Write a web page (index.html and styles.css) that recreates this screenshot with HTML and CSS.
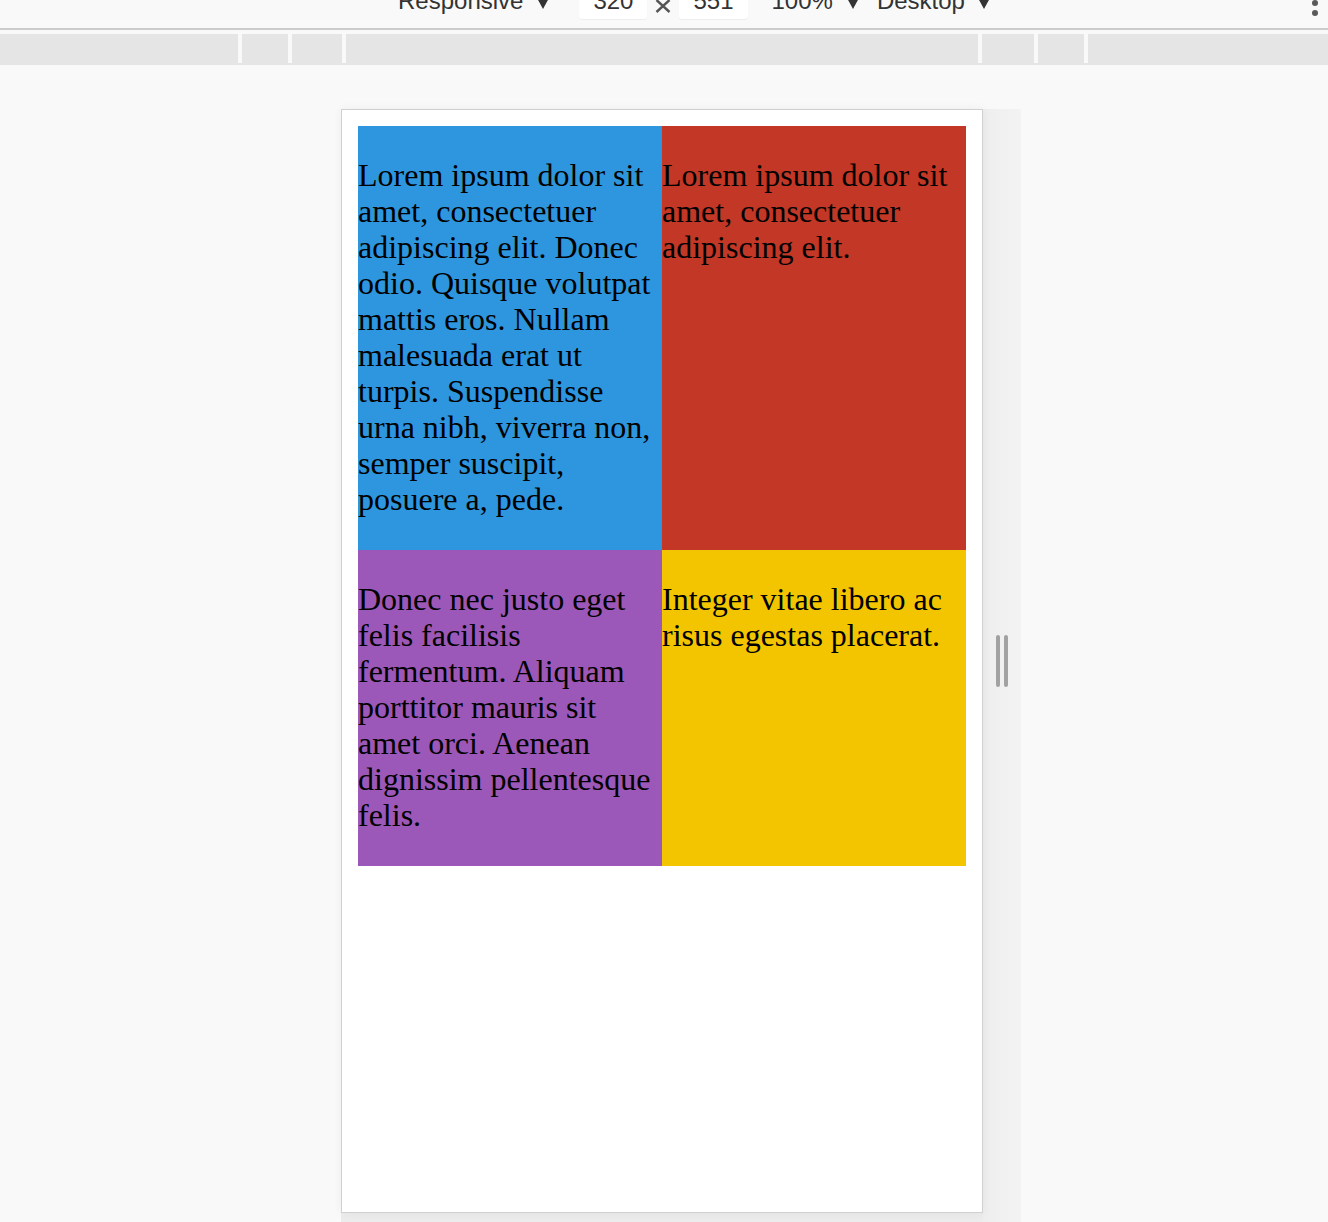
FILE: index.html
```html
<!DOCTYPE html>
<html lang="en">
<head>
<meta charset="utf-8">
<title>Responsive grid</title>
<link rel="stylesheet" href="styles.css">
</head>
<body>
<header class="toolbar">
  <span class="tb-text tb-responsive">Responsive</span>
  <svg class="caret caret-1" width="12" height="11" viewBox="0 0 12 11"><polygon points="0,0 12,0 6,11"/></svg>
  <span class="tb-box tb-box-1">320</span>
  <svg class="times" width="16" height="14" viewBox="0 0 16 14"><path d="M1.5 1 L14.5 13 M14.5 1 L1.5 13"/></svg>
  <span class="tb-box tb-box-2">551</span>
  <span class="tb-text tb-zoom">100%</span>
  <svg class="caret caret-2" width="12" height="11" viewBox="0 0 12 11"><polygon points="0,0 12,0 6,11"/></svg>
  <span class="tb-text tb-desktop">Desktop</span>
  <svg class="caret caret-3" width="12" height="11" viewBox="0 0 12 11"><polygon points="0,0 12,0 6,11"/></svg>
  <svg class="kebab" width="6" height="16" viewBox="0 0 6 16"><circle cx="3" cy="3" r="3"/><circle cx="3" cy="13" r="3"/></svg>
</header>
<div class="ruler">
  <div class="seg seg-a"></div>
  <div class="seg seg-b"></div>
  <div class="seg seg-c"></div>
  <div class="seg seg-d"></div>
  <div class="seg seg-e"></div>
  <div class="seg seg-f"></div>
  <div class="seg seg-g"></div>
</div>
<main class="stage">
  <div class="device">
    <div class="frame">
      <div class="grid">
        <div class="cell blue"><p>Lorem ipsum dolor sit amet, consectetuer adipiscing elit. Donec odio. Quisque volutpat mattis eros. Nullam malesuada erat ut turpis. Suspendisse urna nibh, viverra non, semper suscipit, posuere a, pede.</p></div>
        <div class="cell red"><p>Lorem ipsum dolor sit amet, consectetuer adipiscing elit.</p></div>
        <div class="cell purple"><p>Donec nec justo eget felis facilisis fermentum. Aliquam porttitor mauris sit amet orci. Aenean dignissim pellentesque felis.</p></div>
        <div class="cell yellow"><p>Integer vitae libero ac risus egestas placerat.</p></div>
      </div>
    </div>
    <div class="side">
      <div class="handle"></div>
      <div class="handle"></div>
    </div>
    <div class="bottom"></div>
  </div>
</main>
</body>
</html>
```
FILE: styles.css
```css
html, body {
  margin: 0;
  height: 100%;
  overflow: hidden;
  background: #f9f9f9;
}

.toolbar {
  height: 28px;
  border-bottom: 2px solid #cbcbcb;
  display: flex;
  align-items: flex-start;
  padding-left: 398px;
  overflow: hidden;
  font-family: "Liberation Sans", Arial, sans-serif;
  font-size: 24px;
  line-height: 24px;
  color: #333;
}

.tb-text {
  margin-top: -11px;
  white-space: nowrap;
}

.tb-box {
  margin-top: -11px;
  height: 30px;
  padding: 0 14px;
  background: #fff;
  border-radius: 3px;
  box-shadow: 0 1px 1px rgba(0, 0, 0, 0.05);
  white-space: nowrap;
  box-sizing: border-box;
}

.caret {
  margin-top: -2px;
  fill: #333;
  flex: none;
}

.caret-1 { margin-left: 14px; }
.tb-box-1 { margin-left: 30px; }
.times {
  margin-left: 8px;
  margin-top: -1px;
  flex: none;
}
.times path {
  stroke: #555;
  stroke-width: 2.4;
  fill: none;
}
.tb-box-2 { margin-left: 8px; }
.tb-zoom { margin-left: 24px; }
.caret-2 { margin-left: 14px; }
.tb-desktop { margin-left: 18px; }
.caret-3 { margin-left: 13px; }

.kebab {
  margin-left: auto;
  margin-right: 10px;
  fill: #5a5a5a;
  flex: none;
}

.ruler {
  margin-top: 4px;
  display: flex;
  gap: 4px;
  border-bottom: 2px solid #e5e5e5;
}

.seg {
  height: 29px;
  background: #e5e5e5;
  flex: none;
}
.seg-a { width: 238px; }
.seg-b { width: 46px; }
.seg-c { width: 50px; }
.seg-d { width: 632px; }
.seg-e { width: 52px; }
.seg-f { width: 46px; }
.seg-g { flex: 1; }

.stage {
  padding: 44px 0 0 341px;
}

.device {
  display: grid;
  grid-template-columns: 642px 38px;
  grid-template-rows: 1104px 20px;
}

.frame {
  grid-column: 1;
  grid-row: 1;
  box-sizing: border-box;
  background: #fff;
  border: 1px solid #d0d0d0;
  padding: 16px;
  box-shadow: 0 0 10px rgba(0, 0, 0, 0.05);
  position: relative;
  z-index: 1;
}

.side {
  grid-column: 2;
  grid-row: 1 / 3;
  background: linear-gradient(to right, #eeeeee, #f3f3f3);
  display: flex;
  align-items: center;
  justify-content: center;
  gap: 4px;
  padding-bottom: 20px;
}

.handle {
  width: 4px;
  height: 52px;
  background: #a2a2a2;
  border-radius: 2px;
}

.bottom {
  grid-column: 1;
  grid-row: 2;
  background: #ececec;
}

.grid {
  display: grid;
  grid-template-columns: 304px 304px;
  font-family: "Liberation Serif", "Times New Roman", serif;
  font-size: 32px;
  line-height: 36px;
  color: #000;
}

.cell p {
  margin: 31px 0 33px;
}

.blue { background: #2e96de; }
.red { background: #c23725; }
.purple { background: #9c58b8; }
.yellow { background: #f2c500; }
```
